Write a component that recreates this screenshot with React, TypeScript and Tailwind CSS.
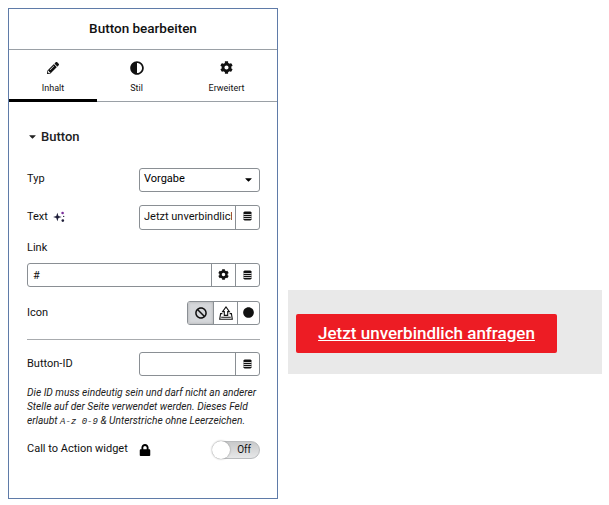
import { FaPencilAlt, FaAdjust, FaCog, FaBan, FaCircle, FaLock, FaCaretDown } from "react-icons/fa";

const border = "border border-[#8a8f94]";

function Db() {
  return (
    <svg width="9" height="10" viewBox="0 0 9 10" className="block">
      <path d="M1.5 0.5 H7.5 L8.5 1.5 V8.5 L7.5 9.5 H1.5 L0.5 8.5 V1.5 Z" fill="#111" />
      <path d="M0.5 3.5 H8.5 M0.5 5.5 H8.5 M0.5 7.5 H8.5" stroke="#fff" strokeWidth="0.8" />
    </svg>
  );
}

function Row({ label, children, extra, low }: { label: string; children: React.ReactNode; extra?: React.ReactNode; low?: boolean }) {
  return (
    <div className="flex items-center justify-between">
      <div className={`flex items-center gap-[5px] text-[#111] ${low ? "pt-[2px]" : "pb-[1px]"}`}>
        {label}
        {extra}
      </div>
      {children}
    </div>
  );
}

function Sparkle() {
  return (
    <svg width="12" height="12" viewBox="0 0 11 11" fill="#1f1f3a">
      <path d="M4 1.6 L5 4.5 L7.9 5.5 L5 6.5 L4 9.4 L3 6.5 L0.1 5.5 L3 4.5 Z" />
      <circle cx="8.8" cy="1.8" r="1.2" fill="#7a2e9a" />
      <circle cx="9" cy="8.8" r="1.2" />
      <circle cx="9.8" cy="5" r="0.6" />
    </svg>
  );
}

function Upload() {
  return (
    <svg width="14" height="14" viewBox="0 0 14 14" fill="none" stroke="#111" strokeWidth="1.1">
      <path d="M3.6 5.6 L7 1 L10.4 5.6 H8.7 V9.4 H5.3 V5.6 Z" />
      <path d="M3.4 7.6 H1.6 L0.7 13.2 H13.3 L12.4 7.6 H10.6" />
      <path d="M2.2 11.2 H11.8" />
    </svg>
  );
}

function Tab({ icon, label, active, width }: { icon: React.ReactNode; label: string; active?: boolean; width: string }) {
  return (
    <div className={`flex flex-col items-center pt-[10px] ${width} ${active ? "border-b-[3px] border-black" : "border-b border-[#9aa0a6] pb-[2px]"}`}>
      <div className="flex h-[15px] items-center text-[14px] text-[#111]">{icon}</div>
      <div className="mt-[6px] h-[18px] text-[9px] leading-[14px] text-[#111]">{label}</div>
    </div>
  );
}

export default function App() {
  return (
    <div className="flex h-[505px] w-[609px] items-start bg-white font-['Roboto',sans-serif] text-[11px]">
      <div className="ml-2 mt-2 flex h-[491px] w-[270px] flex-col border border-[#5f7ba8]">
        <div className="flex h-[41px] items-center justify-center border-b border-[#9aa0a6] pb-[2px] text-[13.5px] font-medium text-[#111]">
          Button bearbeiten
        </div>
        <div className="flex">
          <Tab width="w-[88px]" active icon={<FaPencilAlt className="text-[12px]" />} label="Inhalt" />
          <Tab width="w-[79px]" icon={<FaAdjust />} label="Stil" />
          <Tab width="w-[101px]" icon={<FaCog className="text-[13px]" />} label="Erweitert" />
        </div>
        <div className="flex flex-col pl-[18px] pr-[17px]">
          <div className="mt-[27px] flex h-[15px] items-center gap-[3px] text-[13px] font-medium text-[#222]">
            <FaCaretDown className="text-[11px]" />
            Button
          </div>
          <div className="mt-[24px]">
            <Row label="Typ">
              <div className={`flex h-[24px] w-[121px] items-center justify-between rounded-[3px] pb-[2px] pl-[4px] pr-[5px] ${border}`}>
                <span>Vorgabe</span>
                <FaCaretDown className="text-[11px]" />
              </div>
            </Row>
          </div>
          <div className="mt-[13px]">
            <Row label="Text" extra={<Sparkle />}>
              <div className={`flex h-[25px] w-[121px] items-center rounded-[3px] ${border}`}>
                <div className="ml-[4px] w-[88px] overflow-hidden whitespace-nowrap text-[#111]">Jetzt unverbindlich anfragen</div>
                <div className="ml-[3px] flex h-full flex-1 items-center justify-center border-l border-[#8a8f94] pb-[3px]"><Db /></div>
              </div>
            </Row>
          </div>
          <div className="mt-[10px] text-[#111]">Link</div>
          <div className={`mt-[6px] flex h-[24px] w-[233px] items-center rounded-[3px] ${border}`}>
            <div className="flex-1 pl-[5px] pt-[3px] text-[#111]">#</div>
            <div className="flex h-full w-[24px] items-center justify-center border-l border-[#8a8f94]"><FaCog className="text-[11px] text-[#111]" /></div>
            <div className="flex h-full w-[24px] items-center justify-center border-l border-[#8a8f94]"><Db /></div>
          </div>
          <div className="mt-[14px]">
            <Row low label="Icon">
              <div className={`flex h-[24px] w-[73px] overflow-hidden rounded-[3px] ${border}`}>
                <div className="flex h-full w-[25px] items-center justify-center bg-[#d5d7da] shadow-[inset_0_0_3px_#aaa]"><FaBan className="text-[12px] text-[#111]" /></div>
                <div className="flex h-full w-[24px] items-center justify-center border-l border-[#8a8f94]"><Upload /></div>
                <div className="flex h-full flex-1 items-center justify-center border-l border-[#8a8f94]"><FaCircle className="text-[11px] text-[#111]" /></div>
              </div>
            </Row>
          </div>
          <div className="mt-[14px] h-px w-[233px] bg-[#a8abae]" />
          <div className="mt-[12px]">
            <Row low label="Button-ID">
              <div className={`flex h-[24px] w-[121px] items-center rounded-[3px] ${border}`}>
                <div className="flex-1" />
                <div className="flex h-full w-[24px] items-center justify-center border-l border-[#8a8f94]"><Db /></div>
              </div>
            </Row>
          </div>
          <div className="mt-[10px] w-[236px] text-[10.2px] italic leading-[14px] text-[#222]">
            Die ID muss eindeutig sein und darf nicht an anderer Stelle auf der Seite verwendet werden. Dieses Feld erlaubt <span className="font-['Liberation_Mono',monospace] text-[9px]">A-z 0-9</span> &amp; Unterstriche ohne Leerzeichen.
          </div>
          <div className="mt-[12px] flex items-center justify-between">
            <div className="flex items-center gap-[11px] pb-[2px] text-[#111]">
              Call to Action widget
              <FaLock className="mt-[2px] text-[12px] text-black" />
            </div>
            <div className="flex h-[18px] w-[48px] items-center justify-between rounded-full border border-[#b9bbbd] bg-gradient-to-b from-[#c9cacb] to-[#e6e7e8]">
              <div className="ml-[-1px] h-[18px] w-[18px] rounded-full bg-white shadow-[0_0_2px_#888]" />
              <span className="mr-[8px] text-[10px] text-[#111]">Off</span>
            </div>
          </div>
        </div>
      </div>
      <div className="ml-[10px] mt-[290px] flex h-[84px] w-[314px] items-start bg-[#e9e9e9] pl-[8px] pt-[24px]">
        <div className="flex h-[39px] w-[261px] items-center justify-center rounded-[2px] bg-[#ed1c24] text-[17px] font-medium text-white underline">
          Jetzt unverbindlich anfragen
        </div>
      </div>
    </div>
  );
}
